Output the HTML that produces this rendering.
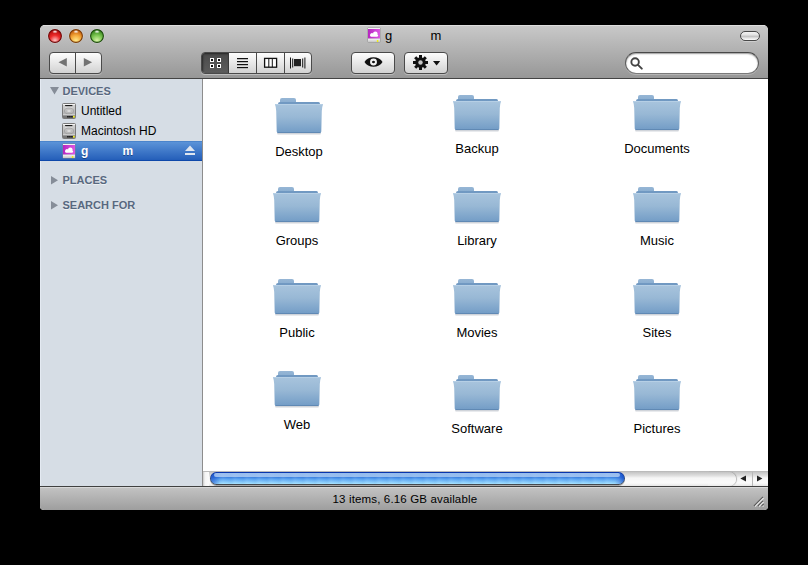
<!DOCTYPE html>
<html><head><meta charset="utf-8">
<style>
*{margin:0;padding:0;box-sizing:border-box}
html,body{width:808px;height:565px;background:#000;overflow:hidden;font-family:"Liberation Sans",sans-serif}
.a{position:absolute;line-height:1;white-space:nowrap}
#win{position:absolute;left:40px;top:25px;width:728px;height:485px;border-radius:5px 5px 4px 4px;overflow:hidden;background:#fff}
#tb{position:absolute;left:0;top:0;width:728px;height:53px;background:linear-gradient(#c8c8c8,#979797);border-top:1px solid #dedede}
#tbline{position:absolute;left:0;top:53px;width:728px;height:1px;background:#444}
#side{position:absolute;left:0;top:54px;width:162px;height:407px;background:#d6dde5;border-left:1px solid #e4eaf2}
#divider{position:absolute;left:162px;top:54px;width:1px;height:407px;background:#8d8d8d}
#content{position:absolute;left:163px;top:54px;width:565px;height:392px;background:#fff}
#sbar{position:absolute;left:0;top:461px;width:728px;height:1px;background:#404040}
#status{position:absolute;left:0;top:462px;width:728px;height:23px;background:linear-gradient(#c2c2c2,#9e9e9e);border-top:1px solid #d8d8d8}
.light{position:absolute;top:4px;width:14px;height:14px;border-radius:50%}
.btn{position:absolute;top:27px;height:22px;border:1px solid #4a4a4a;border-radius:4px;background:linear-gradient(#fdfdfd,#d2d2d2);box-shadow:0 1px 0 rgba(255,255,255,.35)}
.hdr{position:absolute;left:22.5px;font-size:11px;line-height:11px;font-weight:bold;color:#58687f;text-shadow:0 1px 0 rgba(255,255,255,.55)}
.item{position:absolute;left:41px;font-size:12px;line-height:12px;color:#000;white-space:nowrap}
.lbl{position:absolute;width:120px;text-align:center;font-size:13px;line-height:13px;color:#000}
.fold{position:absolute;overflow:visible}
svg{display:block}
</style></head><body>
<svg width="0" height="0" style="position:absolute">
 <defs>
  <linearGradient id="gFront" x1="0" y1="0" x2="0" y2="1">
   <stop offset="0" stop-color="#a8c4dd"/><stop offset="0.45" stop-color="#98b8d5"/><stop offset="1" stop-color="#729cc6"/>
  </linearGradient>
  <linearGradient id="gBack" x1="0" y1="0" x2="0" y2="1">
   <stop offset="0" stop-color="#7199c2"/><stop offset="1" stop-color="#6d96c0"/>
  </linearGradient>
  <linearGradient id="gTab" x1="0" y1="0" x2="0" y2="1">
   <stop offset="0" stop-color="#96b6d5"/><stop offset="1" stop-color="#88acd0"/>
  </linearGradient>
  <linearGradient id="gDrive" x1="0" y1="0" x2="0" y2="1">
   <stop offset="0" stop-color="#d6d6d6"/><stop offset="1" stop-color="#a6a6a6"/>
  </linearGradient>
  <symbol id="folder" viewBox="0 0 52 40">
   <path d="M3 36 H47 L46.4 37.6 H3.6Z" fill="rgba(20,40,70,0.2)"/>
   <path d="M6 7 V3 Q6 1 8 1 H20 Q22 1 22 3 V7Z" fill="url(#gTab)"/>
   <path d="M4 30 V7 Q4 5 6 5 H44.5 Q46 5 46 7 V30Z" fill="url(#gBack)"/>
   <path d="M1 7.6 Q1 7 1.6 7 H48.4 Q49 7 49 7.6 Q48 10 47.8 14 L47.3 34.4 Q47.2 36 45.6 36 H4.4 Q2.8 36 2.7 34.4 L2.2 14 Q2 10 1 7.6Z" fill="url(#gFront)"/>
   <path d="M1.6 7.5 H48.4" stroke="#b6cfe5" stroke-width="1" fill="none"/>
   <path d="M3.6 35.5 H46.4" stroke="#6089b4" stroke-width="1" fill="none"/>
  </symbol>
  <symbol id="drive" viewBox="0 0 14 16">
   <rect x="0.5" y="0.5" width="13" height="15" rx="1" fill="url(#gDrive)" stroke="#7a7a7a"/>
   <rect x="1" y="1" width="12" height="1" fill="#f2f2f2"/>
   <rect x="3" y="2" width="7.5" height="1.4" rx="0.6" fill="#1a1a1a"/>
   <rect x="3" y="3.5" width="7.5" height="0.8" fill="#fafafa"/>
   <ellipse cx="7" cy="8" rx="4.6" ry="2.9" fill="none" stroke="#8c8c8c" stroke-width="0.8" opacity="0.6"/>
   <ellipse cx="7" cy="8" rx="1.8" ry="1" fill="#e6e6e6" opacity="0.8"/>
   <rect x="1" y="11.6" width="12" height="0.8" fill="#f4f4f4"/>
   <rect x="1" y="12.4" width="12" height="2.6" fill="#777"/>
   <rect x="5.3" y="13" width="1.3" height="1.5" fill="#000"/><rect x="7.3" y="13" width="1.3" height="1.5" fill="#000"/><rect x="9.3" y="13" width="1.3" height="1.5" fill="#000"/>
   <rect x="11" y="12.8" width="1.7" height="1.8" fill="#f4f020"/>
  </symbol>
  <linearGradient id="gMag" x1="0" y1="0" x2="1" y2="0">
   <stop offset="0" stop-color="#b626c0"/><stop offset="1" stop-color="#dc58e4"/>
  </linearGradient>
  <linearGradient id="gSil" x1="0" y1="0" x2="0" y2="1">
   <stop offset="0" stop-color="#f8f8f8"/><stop offset="1" stop-color="#c4c4c4"/>
  </linearGradient>
  <symbol id="pdrive" viewBox="0 0 14 16">
   <rect x="0.5" y="0.5" width="13" height="15" rx="1" fill="#8a8a8a" opacity="0.75"/>
   <rect x="1" y="1" width="12" height="1.2" fill="#f4f4f4"/>
   <rect x="1" y="2" width="12" height="9.6" fill="url(#gMag)"/>
   <g fill="#fff">
    <circle cx="5" cy="7.6" r="1.7"/><circle cx="8.3" cy="6.7" r="2.3"/><rect x="3" y="7.4" width="8.2" height="2.3" rx="1.1"/>
   </g>
   <rect x="1" y="11.6" width="12" height="3.4" fill="url(#gSil)"/>
   <circle cx="10.6" cy="14" r="0.9" fill="#f2f000"/>
  </symbol>
 </defs>
</svg>
<div id="win">
  <div id="tb"></div>
  <div id="tbline"></div>
  <!-- traffic lights -->
  <svg class="a" style="left:0;top:0" width="120" height="22">
   <radialGradient id="hl" cx="0.5" cy="0.4" r="0.6"><stop offset="0" stop-color="#fff" stop-opacity="0.95"/><stop offset="1" stop-color="#fff" stop-opacity="0"/></radialGradient>
   <radialGradient id="rgr" cx="0.5" cy="0.85" r="0.75">
    <stop offset="0" stop-color="#ffc4c4"/><stop offset="0.55" stop-color="#ec2a2a"/><stop offset="1" stop-color="#b80e0e"/>
   </radialGradient>
   <circle cx="15" cy="11" r="7.6" fill="rgba(255,255,255,0.25)"/>
   <circle cx="15" cy="11" r="6.4" fill="url(#rgr)" stroke="#6e0a0a" stroke-width="1.1"/>
   <ellipse cx="15" cy="6.9" rx="2.6" ry="1.7" fill="url(#hl)"/>
   <radialGradient id="rgo" cx="0.5" cy="0.85" r="0.75">
    <stop offset="0" stop-color="#ffe98a"/><stop offset="0.55" stop-color="#f4a83a"/><stop offset="1" stop-color="#c8620e"/>
   </radialGradient>
   <circle cx="36" cy="11" r="7.6" fill="rgba(255,255,255,0.25)"/>
   <circle cx="36" cy="11" r="6.4" fill="url(#rgo)" stroke="#7a3c08" stroke-width="1.1"/>
   <ellipse cx="36" cy="6.9" rx="2.6" ry="1.7" fill="url(#hl)"/>
   <radialGradient id="rgg" cx="0.5" cy="0.85" r="0.75">
    <stop offset="0" stop-color="#d8f4a8"/><stop offset="0.55" stop-color="#7cc652"/><stop offset="1" stop-color="#3c8a20"/>
   </radialGradient>
   <circle cx="57" cy="11" r="7.6" fill="rgba(255,255,255,0.25)"/>
   <circle cx="57" cy="11" r="6.4" fill="url(#rgg)" stroke="#1c4a0c" stroke-width="1.1"/>
   <ellipse cx="57" cy="6.9" rx="2.6" ry="1.7" fill="url(#hl)"/>
  </svg>
  <!-- title -->
  <svg class="a" style="left:327px;top:2px" width="14" height="16"><use href="#pdrive"/></svg>
  <div class="a" style="left:345px;top:4px;font-size:13px;color:#000">g</div>
  <div class="a" style="left:390.5px;top:4px;font-size:13px;color:#000">m</div>
  <!-- pill -->
  <div class="a" style="left:700px;top:6px;width:20px;height:10px;border-radius:5px;border:1.2px solid #484848;background:linear-gradient(#f4f4f4,#e4e4e4 35%,#c4c4c4 55%,#f6f6f6 90%);box-shadow:0 1px 0 rgba(255,255,255,.3)"></div>
  <!-- back/forward -->
  <div class="btn" style="left:9px;width:53px"></div>
  <div class="a" style="left:35px;top:28px;width:1px;height:20px;background:#4a4a4a"></div>
  <svg class="a" style="left:0;top:0" width="728" height="54">
   <path d="M18.5 37.3 L26.8 33 V41.6Z" fill="#737373"/>
   <path d="M52.1 37.3 L43.8 33 V41.6Z" fill="#737373"/>
  </svg>
  <!-- view group -->
  <div class="btn" style="left:161px;width:111px;overflow:hidden">
    <div class="a" style="left:0;top:0;width:26px;height:20px;background:linear-gradient(#4a4a4a,#5c5c5c);box-shadow:inset 1px 1px 2px rgba(0,0,0,.5)"></div>
    <div class="a" style="left:26px;top:0;width:1px;height:20px;background:#3a3a3a"></div>
    <div class="a" style="left:54px;top:0;width:1px;height:20px;background:#4a4a4a"></div>
    <div class="a" style="left:82px;top:0;width:1px;height:20px;background:#4a4a4a"></div>
  </div>
  <svg class="a" style="left:0;top:0" width="728" height="54">
   <g fill="#111" stroke="#fff" stroke-width="1">
    <rect x="170.5" y="33.5" width="3" height="3"/><rect x="177.5" y="33.5" width="3" height="3"/>
    <rect x="170.5" y="39.5" width="3" height="3"/><rect x="177.5" y="39.5" width="3" height="3"/>
   </g>
   <g fill="#fff">
    <rect x="197" y="34" width="11" height="1"/><rect x="197" y="37" width="11" height="1"/><rect x="197" y="40" width="11" height="1"/><rect x="197" y="43" width="11" height="1"/>
   </g>
   <g fill="#111">
    <rect x="197" y="33" width="11" height="1.3"/><rect x="197" y="36" width="11" height="1.3"/><rect x="197" y="39" width="11" height="1.3"/><rect x="197" y="42" width="11" height="1.3"/>
   </g>
   <rect x="224.6" y="33.4" width="12" height="8.8" fill="#fff" stroke="#111" stroke-width="1.3"/>
   <rect x="228.3" y="33.4" width="1" height="8.8" fill="#111"/><rect x="231.8" y="33.4" width="1" height="8.8" fill="#111"/>
   <g fill="#111">
    <rect x="250" y="32.5" width="1" height="11"/><rect x="252.2" y="33.5" width="1" height="9"/>
    <rect x="254" y="34" width="7" height="7.2" fill="#222"/>
    <rect x="262.2" y="33.5" width="1" height="9"/><rect x="264.4" y="32.5" width="1" height="11"/>
   </g>
  </svg>
  <!-- eye -->
  <div class="btn" style="left:311px;width:44px"></div>
  <!-- action -->
  <div class="btn" style="left:364px;width:44px"></div>
  <svg class="a" style="left:0;top:0" width="728" height="54">
   <path d="M324.5 37 C327.5 30.6 339.5 30.6 342.5 37 C339.5 43.4 327.5 43.4 324.5 37Z" fill="#111"/>
   <circle cx="333.5" cy="37" r="2.4" fill="none" stroke="#f0f0f0" stroke-width="2.1"/>
   <circle cx="333.5" cy="37" r="1.05" fill="#111"/>
   <g transform="translate(380.5 37.5)">
    <g fill="#111">
     <rect x="-1.5" y="-7.5" width="3" height="15"/>
     <rect x="-1.5" y="-7.5" width="3" height="15" transform="rotate(45)"/>
     <rect x="-1.5" y="-7.5" width="3" height="15" transform="rotate(90)"/>
     <rect x="-1.5" y="-7.5" width="3" height="15" transform="rotate(135)"/>
     <circle r="5.3"/>
    </g>
    <circle r="2.2" fill="#c8c8c8"/>
   </g>
   <path d="M393 36 H400.2 L396.6 40.6Z" fill="#111"/>
  </svg>
  <!-- search -->
  <div class="a" style="left:585px;top:27px;width:134px;height:22px;border-radius:11px;border:1px solid;border-color:#484848 #5c5c5c #7a7a7a;background:#fff;box-shadow:inset 0 1px 1.5px rgba(0,0,0,.4),0 1px 0 rgba(255,255,255,.25)"></div>
  <svg class="a" style="left:0;top:0" width="728" height="54">
   <circle cx="595.1" cy="37" r="3.75" fill="none" stroke="#444" stroke-width="1.9"/>
   <path d="M598.2 40.1 L601.8 43.6" stroke="#444" stroke-width="2" stroke-linecap="round"/>
  </svg>

  <div id="side"></div>
  <div id="divider"></div>
  <div id="content"></div>
  <!-- sidebar -->
  <svg class="a" style="left:10px;top:62px" width="9" height="8"><path d="M0 0 H9 L4.5 7.5Z" fill="#868d98"/></svg>
  <div class="hdr" style="top:61px">DEVICES</div>
  <svg class="a" style="left:22px;top:78px" width="14" height="16"><use href="#drive"/></svg>
  <div class="item" style="top:80px">Untitled</div>
  <svg class="a" style="left:22px;top:98px" width="14" height="16"><use href="#drive"/></svg>
  <div class="item" style="top:100px">Macintosh HD</div>
  <div class="a" style="left:0;top:116px;width:162px;height:20px;background:linear-gradient(#5b93d8,#2660ba 92%,#0e48aa 95%);border-top:1px solid #4a84cc"></div>
  <svg class="a" style="left:22px;top:118px" width="14" height="16"><use href="#pdrive"/></svg>
  <div class="item" style="top:120px;color:#fff;font-weight:bold;text-shadow:0 1px 0 rgba(0,20,60,.45)">g</div>
  <div class="item" style="top:120px;left:82.5px;color:#fff;font-weight:bold;text-shadow:0 1px 0 rgba(0,20,60,.45)">m</div>
  <svg class="a" style="left:145px;top:120px" width="11" height="11"><path d="M0 6 L5 0.5 L10 6Z M0 8 H10 V10 H0Z" fill="#dfe6f0"/></svg>
  <svg class="a" style="left:11px;top:151px" width="8" height="9"><path d="M0 0 L7 4.25 L0 8.5Z" fill="#868d98"/></svg>
  <div class="hdr" style="top:150px">PLACES</div>
  <svg class="a" style="left:11px;top:176px" width="8" height="9"><path d="M0 0 L7 4.25 L0 8.5Z" fill="#868d98"/></svg>
  <div class="hdr" style="top:175px">SEARCH FOR</div>

  <!-- items -->
<svg class="fold" style="left:234px;top:72px" width="52" height="40" viewBox="0 0 52 40"><use href="#folder"/></svg>
<div class="lbl" style="left:199px;top:120.4px">Desktop</div>
<svg class="fold" style="left:412px;top:69px" width="52" height="40" viewBox="0 0 52 40"><use href="#folder"/></svg>
<div class="lbl" style="left:377px;top:117.4px">Backup</div>
<svg class="fold" style="left:592px;top:69px" width="52" height="40" viewBox="0 0 52 40"><use href="#folder"/></svg>
<div class="lbl" style="left:557px;top:117.4px">Documents</div>
<svg class="fold" style="left:232px;top:161px" width="52" height="40" viewBox="0 0 52 40"><use href="#folder"/></svg>
<div class="lbl" style="left:197px;top:209.4px">Groups</div>
<svg class="fold" style="left:412px;top:161px" width="52" height="40" viewBox="0 0 52 40"><use href="#folder"/></svg>
<div class="lbl" style="left:377px;top:209.4px">Library</div>
<svg class="fold" style="left:592px;top:161px" width="52" height="40" viewBox="0 0 52 40"><use href="#folder"/></svg>
<div class="lbl" style="left:557px;top:209.4px">Music</div>
<svg class="fold" style="left:232px;top:253px" width="52" height="40" viewBox="0 0 52 40"><use href="#folder"/></svg>
<div class="lbl" style="left:197px;top:301.4px">Public</div>
<svg class="fold" style="left:412px;top:253px" width="52" height="40" viewBox="0 0 52 40"><use href="#folder"/></svg>
<div class="lbl" style="left:377px;top:301.4px">Movies</div>
<svg class="fold" style="left:592px;top:253px" width="52" height="40" viewBox="0 0 52 40"><use href="#folder"/></svg>
<div class="lbl" style="left:557px;top:301.4px">Sites</div>
<svg class="fold" style="left:232px;top:345px" width="52" height="40" viewBox="0 0 52 40"><use href="#folder"/></svg>
<div class="lbl" style="left:197px;top:393.4px">Web</div>
<svg class="fold" style="left:412px;top:349px" width="52" height="40" viewBox="0 0 52 40"><use href="#folder"/></svg>
<div class="lbl" style="left:377px;top:397.4px">Software</div>
<svg class="fold" style="left:592px;top:349px" width="52" height="40" viewBox="0 0 52 40"><use href="#folder"/></svg>
<div class="lbl" style="left:557px;top:397.4px">Pictures</div>

<!-- scrollbar -->
  <div class="a" style="left:163px;top:446px;width:565px;height:15px;background:linear-gradient(#b2b2b2 0,#c4c4c4 1px,#e2e2e2 5px,#f6f6f6 7px,#fafafa 12px,#ececec 14px,#e6e6e6 15px)"></div>
  <div class="a" style="left:163px;top:447px;width:6px;height:14px;background:linear-gradient(90deg,#c8c8c8,#f4f4f4 2px,#fbfbfb)"></div>
  <div class="a" style="left:169.5px;top:447px;width:415px;height:13px;border-radius:6.5px;background:linear-gradient(#0634b0,#2a4a80 50%,#4a4a4a);box-shadow:0 1px 0 rgba(0,0,0,.28)"></div>
  <div class="a" style="left:170.5px;top:448px;width:413px;height:11px;border-radius:5.5px;background:linear-gradient(#2f74dc 0,#3a80e4 4px,#4a90e4 5px,#5aa4f2 6px,#a4e2ff 11px)"></div>
  <div class="a" style="left:170.5px;top:448px;width:413px;height:11px;border-radius:5.5px;background:linear-gradient(90deg,rgba(0,50,190,.6),rgba(0,50,190,0) 9px,rgba(0,50,190,0) 404px,rgba(0,50,190,.6))"></div>
  <div class="a" style="left:170.5px;top:448px;width:413px;height:11px;border-radius:5.5px;background:repeating-linear-gradient(90deg,rgba(255,255,255,.06) 0,rgba(255,255,255,0) 4px,rgba(0,30,120,.03) 8px,rgba(255,255,255,.06) 12px)"></div>
  <div class="a" style="left:174px;top:448px;width:406px;height:4px;border-radius:2px;background:linear-gradient(90deg,rgba(190,215,245,.75),rgba(165,200,240,.85) 50%,rgba(190,215,245,.75))"></div>
  <div class="a" style="left:668px;top:447px;width:28px;height:14px;border-radius:0 7px 7px 0;background:linear-gradient(#c4c4c4 0,#e2e2e2 4px,#f6f6f6 6px,#fafafa 11px,#ececec 14px);box-shadow:1px 0 1px rgba(0,0,0,.28)"></div>
  <div class="a" style="left:711.5px;top:447px;width:1px;height:14px;background:#b8b8b8"></div>
  <svg class="a" style="left:0;top:443px" width="728" height="24">
   <path d="M700.3 10.5 L706 7.5 V13.6Z" fill="#222"/>
   <path d="M722.4 10.5 L717 7.5 V13.6Z" fill="#222"/>
  </svg>
  <div id="sbar"></div>
  <div id="status"></div>
  <div class="a" style="left:292.5px;top:469px;font-size:11.5px;letter-spacing:0.15px;color:#000">13 items, 6.16 GB available</div>
<svg class="a" style="left:708px;top:466px" width="18" height="18">
   <g stroke-width="1.2">
    <path d="M6 15 L15 6" stroke="#5a5a5a"/><path d="M7 15.6 L15.6 7" stroke="#e8e8e8"/>
    <path d="M10 15 L15 10" stroke="#5a5a5a"/><path d="M11 15.6 L15.6 11" stroke="#e8e8e8"/>
    <path d="M13.6 15 L15.6 13" stroke="#5a5a5a"/><path d="M14.6 15.6 L15.6 14.6" stroke="#e8e8e8"/>
   </g>
  </svg>
</div>
</body></html>
